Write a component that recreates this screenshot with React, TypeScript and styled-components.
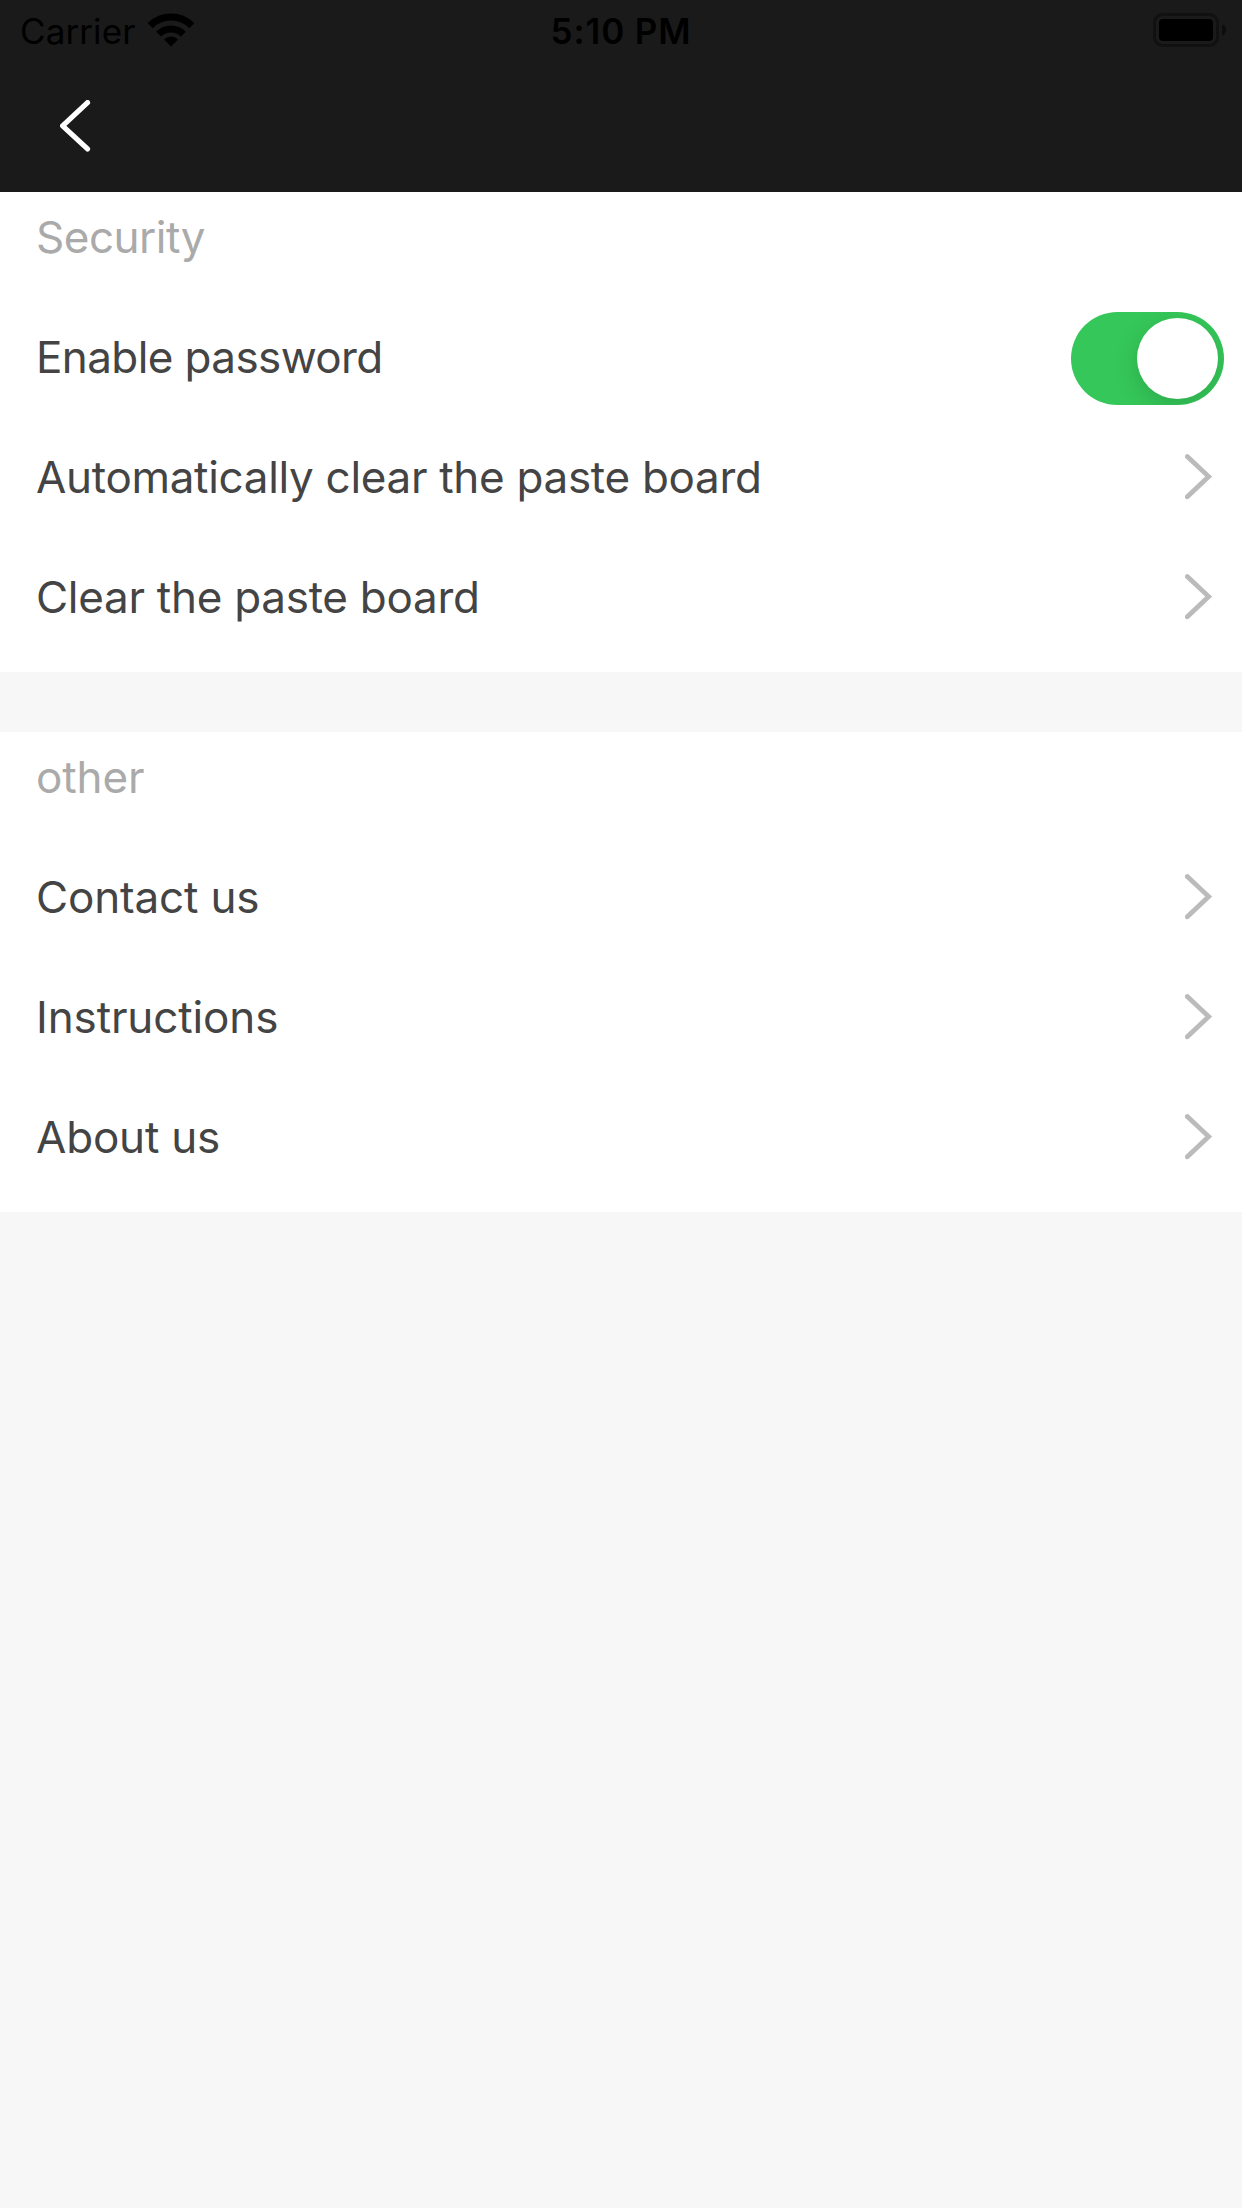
import React, { useState } from "react";
import styled, { createGlobalStyle } from "styled-components";

const GlobalStyle = createGlobalStyle`
  *, *::before, *::after { box-sizing: border-box; }
  body {
    margin: 0;
    background: #f7f7f7;
    font-family: Inter, "Liberation Sans", sans-serif;
  }
`;

const Screen = styled.div`
  display: flex;
  flex-direction: column;
  gap: 60px;
  width: 1242px;
  min-height: 2208px;
  background: #f7f7f7;
`;

const Header = styled.header`
  height: 192px;
  margin-bottom: -60px;
  background: #1a1a1a;
`;

const StatusBar = styled.div`
  display: grid;
  grid-template-columns: 1fr auto 1fr;
  align-items: center;
  height: 60px;
  padding: 0 16px;
  color: #000;
  font-size: 35px;
  line-height: 58px;
`;

const CarrierGroup = styled.div`
  display: flex;
  align-items: center;
  gap: 13px;
  padding-left: 4px;
`;

const StatusText = styled.span<{ $bold?: boolean; $tracking: number }>`
  padding-top: 2px;
  font-weight: ${(p) => (p.$bold ? 600 : 400)};
  letter-spacing: ${(p) => p.$tracking}px;
  white-space: nowrap;
`;

const StatusIcon = styled.svg<{ $end?: boolean }>`
  display: block;
  justify-self: ${(p) => (p.$end ? "end" : "auto")};
`;

const NavBar = styled.nav`
  display: flex;
  align-items: center;
  height: 132px;
  padding: 0 60px;
`;

const BackButton = styled.button`
  display: block;
  padding: 0;
  border: 0;
  background: none;

  svg { display: block; }
`;

const Section = styled.section`
  padding-bottom: 15px;
  background: #fff;
`;

const SectionTitle = styled.h2<{ $tracking: number }>`
  height: 90px;
  margin: 0 0 15px;
  padding-left: 36px;
  color: #aaa;
  font-size: 44px;
  font-weight: 400;
  line-height: 90px;
  letter-spacing: ${(p) => p.$tracking}px;
`;

const Row = styled.div`
  display: flex;
  align-items: center;
  justify-content: space-between;
  height: 120px;
  padding: 0 18px 0 36px;
`;

const Label = styled.span<{ $tracking: number }>`
  color: #444;
  font-size: 44px;
  line-height: 90px;
  letter-spacing: ${(p) => p.$tracking}px;
  white-space: nowrap;
`;

const Chevron = styled.svg`
  display: block;
  margin-right: 12px;
`;

const Toggle = styled.button<{ $on: boolean }>`
  display: flex;
  justify-content: ${(p) => (p.$on ? "flex-end" : "flex-start")};
  width: 153px;
  height: 93px;
  margin-top: 3px;
  padding: 6px;
  border: 0;
  border-radius: 47px;
  background: ${(p) => (p.$on ? "#35c759" : "#e9e9ea")};
  overflow: hidden;
`;

const Knob = styled.span`
  width: 81px;
  height: 81px;
  border-radius: 50%;
  background: #fff;
  box-shadow: 0 7px 24px rgba(0, 0, 0, 0.15);
`;

type Item = { label: string; tracking: number; toggle?: boolean };
type Group = { title: string; tracking: number; items: Item[] };

const groups: Group[] = [
  {
    title: "Security",
    tracking: -0.5,
    items: [
      { label: "Enable password", tracking: -0.6, toggle: true },
      { label: "Automatically clear the paste board", tracking: -0.31 },
      { label: "Clear the paste board", tracking: -0.28 },
    ],
  },
  {
    title: "other",
    tracking: -0.1,
    items: [
      { label: "Contact us", tracking: -0.16 },
      { label: "Instructions", tracking: -0.13 },
      { label: "About us", tracking: -0.2 },
    ],
  },
];

const WifiIcon = () => (
  <StatusIcon width="46" height="34" viewBox="0 0 46 34">
    <path d="M2.14 12.64A29.5 29.5 0 0 1 43.86 12.64" fill="none" stroke="#000" strokeWidth="7.2" />
    <path d="M10.63 21.13A17.5 17.5 0 0 1 35.37 21.13" fill="none" stroke="#000" strokeWidth="7" />
    <path d="M23 33.5L16 26.5A9.9 9.9 0 0 1 30 26.5Z" fill="#000" />
  </StatusIcon>
);

const BatteryIcon = () => (
  <StatusIcon $end width="73" height="34" viewBox="0 0 73 34">
    <rect x="1.5" y="1.5" width="63" height="31" rx="8" fill="none" stroke="#111" strokeWidth="3" />
    <rect x="6" y="6" width="54" height="22" rx="4" fill="#000" />
    <path d="M69 11.2C71.6 12.2 73 14.4 73 17S71.6 21.8 69 22.8Z" fill="#0d0d0d" />
  </StatusIcon>
);

const BackIcon = () => (
  <svg width="31" height="52" viewBox="0 0 31 52">
    <path d="M27.5 2.6L2.6 25.8L27.5 48.9" fill="none" stroke="#fff" strokeWidth="5.2" strokeLinecap="round" strokeLinejoin="round" />
  </svg>
);

const ForwardIcon = () => (
  <Chevron width="27" height="46" viewBox="0 0 27 46">
    <path d="M2.3 2.6L23.7 22.6L2.3 42.8" fill="none" stroke="#bbb" strokeWidth="4.8" strokeLinecap="round" strokeLinejoin="miter" />
  </Chevron>
);

export default function App() {
  const [passwordOn, setPasswordOn] = useState(true);

  return (
    <>
      <GlobalStyle />
      <Screen>
        <Header>
          <StatusBar>
            <CarrierGroup>
              <StatusText $tracking={0.1}>Carrier</StatusText>
              <WifiIcon />
            </CarrierGroup>
            <StatusText $bold $tracking={0.9}>5:10 PM</StatusText>
            <BatteryIcon />
          </StatusBar>
          <NavBar>
            <BackButton aria-label="Back">
              <BackIcon />
            </BackButton>
          </NavBar>
        </Header>
        {groups.map((group) => (
          <Section key={group.title}>
            <SectionTitle $tracking={group.tracking}>{group.title}</SectionTitle>
            {group.items.map((item) => (
              <Row key={item.label}>
                <Label $tracking={item.tracking}>{item.label}</Label>
                {item.toggle ? (
                  <Toggle
                    $on={passwordOn}
                    role="switch"
                    aria-checked={passwordOn}
                    aria-label={item.label}
                    onClick={() => setPasswordOn(!passwordOn)}
                  >
                    <Knob />
                  </Toggle>
                ) : (
                  <ForwardIcon />
                )}
              </Row>
            ))}
          </Section>
        ))}
      </Screen>
    </>
  );
}
